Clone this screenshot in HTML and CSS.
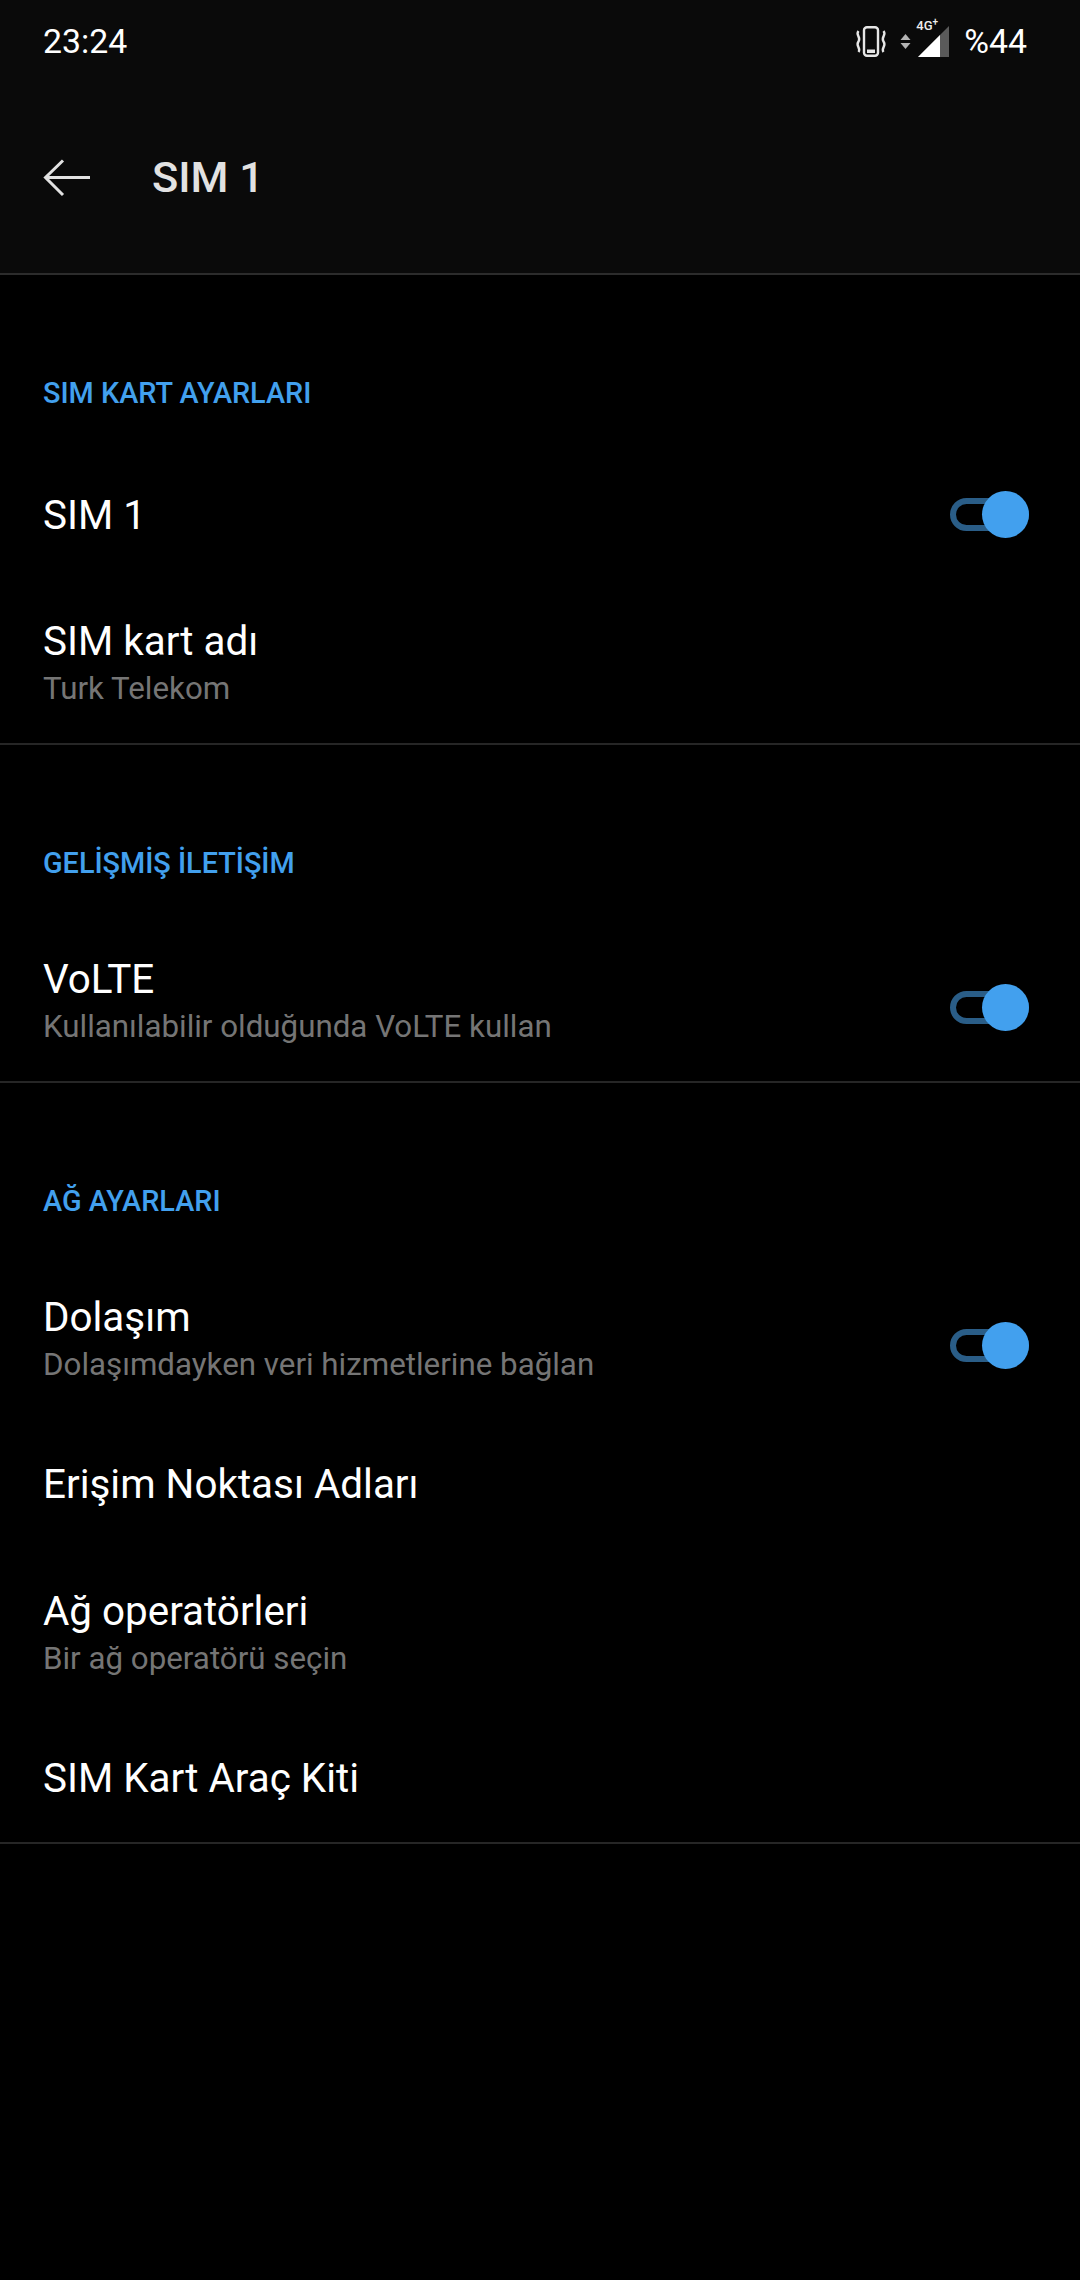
FILE: index.html
```html
<!DOCTYPE html>
<html lang="tr">
<head>
<meta charset="UTF-8" />
<title>SIM 1</title>
<link rel="stylesheet" href="styles.css">
</head>
<body>

<header class="top">
  <div class="status">
    <span class="clock">23:24</span>
    <div class="status-right">
      <svg class="ic-vibrate" width="32" height="31" viewBox="0 0 32 31" fill="none" stroke="#e6e6e6">
        <rect x="9" y="1.2" width="14" height="28.6" rx="3" stroke-width="2.4"/>
        <rect x="12" y="23.5" width="8" height="3.5" fill="#e6e6e6" stroke="none"/>
        <path d="M3.5 5 C0 9 6.5 11 3.5 15.5 C0 20 6.5 22 3.5 26" stroke-width="2.4"/>
        <path d="M28.5 5 C32 9 25.5 11 28.5 15.5 C32 20 25.5 22 28.5 26" stroke-width="2.4"/>
      </svg>
      <svg class="ic-arrows" width="11" height="15" viewBox="0 0 11 15" fill="#b4b4b4">
        <path d="M5.5 0 L10.5 6 H0.5 Z"/>
        <path d="M0.5 9 H10.5 L5.5 15 Z"/>
      </svg>
      <div class="signal">
        <span class="net">4G<sup>+</sup></span>
        <svg width="31" height="31" viewBox="0 0 31 31">
          <path d="M31 0 V31 H0 Z" fill="#5a5a5a"/>
          <path d="M22 9 V31 H0 Z" fill="#fff"/>
        </svg>
      </div>
      <span class="battery">%44</span>
    </div>
  </div>
  <div class="toolbar">
    <svg class="back" width="48" height="38" viewBox="0 0 48 38" fill="none" stroke="#e2e2e2" stroke-width="3">
      <path d="M47 18.5 H3"/>
      <path d="M20 1.5 L2.5 18.5 L20 36"/>
    </svg>
    <h1>SIM 1</h1>
  </div>
</header>

<section class="group">
  <h2>SIM KART AYARLARI</h2>
  <div class="row row-single row-first">
    <div class="text"><div class="title">SIM 1</div></div>
    <div class="switch"><span class="knob"></span></div>
  </div>
  <div class="row">
    <div class="text">
      <div class="title">SIM kart adı</div>
      <div class="sub">Turk Telekom</div>
    </div>
  </div>
</section>

<section class="group">
  <h2>GELİŞMİŞ İLETİŞİM</h2>
  <div class="row">
    <div class="text">
      <div class="title">VoLTE</div>
      <div class="sub">Kullanılabilir olduğunda VoLTE kullan</div>
    </div>
    <div class="switch"><span class="knob"></span></div>
  </div>
</section>

<section class="group">
  <h2>AĞ AYARLARI</h2>
  <div class="row">
    <div class="text">
      <div class="title">Dolaşım</div>
      <div class="sub">Dolaşımdayken veri hizmetlerine bağlan</div>
    </div>
    <div class="switch"><span class="knob"></span></div>
  </div>
  <div class="row row-single">
    <div class="text"><div class="title">Erişim Noktası Adları</div></div>
  </div>
  <div class="row">
    <div class="text">
      <div class="title">Ağ operatörleri</div>
      <div class="sub">Bir ağ operatörü seçin</div>
    </div>
  </div>
  <div class="row row-single">
    <div class="text"><div class="title">SIM Kart Araç Kiti</div></div>
  </div>
</section>

</body>
</html>
```

FILE: styles.css
```css
* {
  box-sizing: border-box;
}

body {
  margin: 0;
  width: 1080px;
  height: 2280px;
  background: #000;
  color: #fff;
  font-family: Roboto, "Liberation Sans", sans-serif;
  overflow: hidden;
}

/* Status bar + toolbar */
.top {
  height: 275px;
  background: #0a0a0a;
  border-bottom: 2px solid #2c2c2c;
  display: flex;
  flex-direction: column;
}

.status {
  height: 82px;
  padding: 0 53px 0 43px;
  display: flex;
  align-items: center;
  justify-content: space-between;
}

.clock {
  font-size: 33.8px;
}

.status-right {
  display: flex;
  align-items: center;
}

.ic-vibrate {
  margin-right: 13px;
}

.ic-arrows {
  margin-right: 7px;
}

.signal {
  position: relative;
  width: 31px;
  height: 31px;
  margin-right: 15px;
}

.signal svg {
  display: block;
}

.net {
  position: absolute;
  left: -2px;
  top: -7px;
  font-size: 13px;
  font-weight: 500;
  line-height: 14px;
  color: #eee;
}

.net sup {
  font-size: 10px;
  line-height: 0;
}

.battery {
  font-size: 33.8px;
}

.toolbar {
  flex: 1;
  padding-left: 43px;
  display: flex;
  align-items: center;
}

.back {
  margin-right: 61px;
}

h1 {
  margin: 0;
  font-size: 43.4px;
  font-weight: 500;
  color: #e2e2e2;
}

/* Settings groups */
.group {
  padding-top: 95px;
  border-bottom: 2px solid #262626;
}

h2 {
  margin: 0 0 30px;
  padding-left: 43px;
  height: 46px;
  line-height: 46px;
  font-size: 28.8px;
  font-weight: 500;
  color: #42a0ee;
}

.row {
  padding: 40px 51px 30px 43px;
  display: flex;
  align-items: center;
  justify-content: space-between;
}

.row-single {
  padding-top: 42px;
  padding-bottom: 39px;
}

.row-first {
  padding-top: 46px;
  padding-bottom: 38px;
}

.title {
  font-size: 40.4px;
  line-height: 48px;
}

.sub {
  margin-top: -1px;
  font-size: 31.3px;
  line-height: 48px;
  color: #757575;
}

/* Toggle */
.switch {
  position: relative;
  width: 79px;
  height: 33px;
  margin-top: 8px;
  border: 6px solid #2a5d87;
  border-radius: 17px;
}

.row-first .switch {
  margin-top: 0;
  margin-bottom: 4px;
}

.knob {
  position: absolute;
  right: -6px;
  top: -13px;
  width: 47px;
  height: 47px;
  border-radius: 50%;
  background: #42a0ee;
}
```
